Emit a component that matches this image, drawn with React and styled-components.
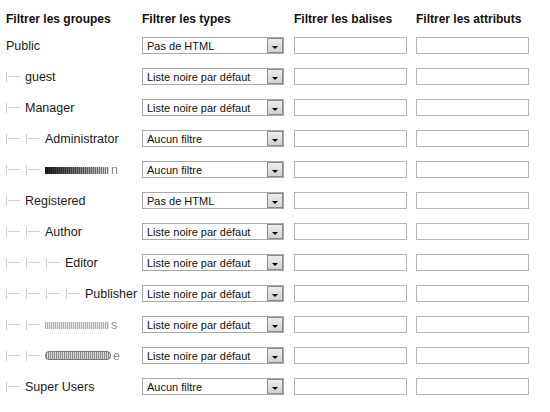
import React from "react";
import styled, { createGlobalStyle } from "styled-components";

const GlobalStyle = createGlobalStyle`
  html, body {
    margin: 0;
    padding: 0;
    background: #fff;
  }
  body {
    font-family: "Liberation Sans", Arial, sans-serif;
    color: #1a1a1a;
  }
`;

const groups = [
  { id: 1, name: "Public", level: 0, filter: "Pas de HTML" },
  { id: 2, name: "guest", level: 1, filter: "Liste noire par défaut" },
  { id: 3, name: "Manager", level: 1, filter: "Liste noire par défaut" },
  { id: 4, name: "Administrator", level: 2, filter: "Aucun filtre" },
  { id: 5, hidden: "dark", tail: "n", level: 2, filter: "Aucun filtre" },
  { id: 6, name: "Registered", level: 1, filter: "Pas de HTML" },
  { id: 7, name: "Author", level: 2, filter: "Liste noire par défaut" },
  { id: 8, name: "Editor", level: 3, filter: "Liste noire par défaut" },
  { id: 9, name: "Publisher", level: 4, filter: "Liste noire par défaut" },
  { id: 10, hidden: "light", tail: "s", level: 2, filter: "Liste noire par défaut" },
  { id: 11, hidden: "outline", tail: "e", level: 2, filter: "Liste noire par défaut" },
  { id: 12, name: "Super Users", level: 1, filter: "Aucun filtre" },
];

const Page = styled.div`
  padding: 8px 0 0 6px;
`;

const Grid = styled.div`
  display: grid;
  grid-template-columns: 136px 152px 122px 114px;
  grid-template-rows: 22px;
  grid-auto-rows: 31px;
  align-items: center;
`;

const Head = styled.div`
  font-weight: bold;
  font-size: 12px;
  color: #111;
  white-space: nowrap;
`;

const GroupCell = styled.div`
  display: flex;
  align-items: center;
  font-size: 12.5px;
  white-space: nowrap;
  height: 31px;
`;

const Branch = styled.span`
  display: inline-flex;
  align-items: center;
  width: 20px;
  height: 10px;
  flex: none;
  box-sizing: border-box;
  border-left: 1px solid #cfcfcf;

  &::after {
    content: "";
    display: block;
    width: 12px;
    height: 1px;
    margin-left: 1px;
    background: #cfcfcf;
  }
`;

const Label = styled.span`
  margin-left: ${(p) => (p.$nested ? "-1px" : "0")};
`;

// blurred-out group names: striped smears with one legible trailing letter
const smudgeFill = {
  dark: "repeating-linear-gradient(90deg, #888 0 1px, #f4f4f4 1px 2px), linear-gradient(90deg, #222 0%, #777 45%, #e8e8e8 100%)",
  light: "repeating-linear-gradient(90deg, #999 0 1px, #e4e4e4 1px 2px)",
  outline: "repeating-linear-gradient(90deg, #888 0 1px, #ddd 1px 2px)",
};

const Smudge = styled.span`
  display: inline-block;
  width: 64px;
  height: 7px;
  margin-right: 2px;
  filter: blur(0.6px);
  background: ${(p) => smudgeFill[p.$kind]};
  background-blend-mode: multiply;
  border: ${(p) => (p.$kind === "outline" ? "1px solid #777" : "none")};
  border-radius: ${(p) => (p.$kind === "outline" ? "4px" : "0")};
  opacity: ${(p) => (p.$kind === "light" ? 0.8 : 1)};
`;

const Tail = styled.span`
  color: #888;
  filter: blur(0.4px);
`;

const Select = styled.div`
  width: 142px;
  height: 17px;
  box-sizing: border-box;
  border: 1px solid #a9a9a9;
  display: flex;
  align-items: center;
  justify-content: space-between;
  font-size: 11px;
  padding-left: 4px;
  background: #fff;
  color: #111;
`;

const ArrowButton = styled.span`
  width: 16px;
  height: 15px;
  box-sizing: border-box;
  border: 1px solid #8a8a8a;
  background: linear-gradient(#ececec, #d2d2d2);
  display: flex;
  align-items: center;
  justify-content: center;

  &::after {
    content: "";
    width: 0;
    height: 0;
    margin-top: 3px;
    border-left: 3px solid transparent;
    border-right: 3px solid transparent;
    border-top: 3px solid #000;
  }
`;

const Field = styled.div`
  width: 113px;
  height: 17px;
  box-sizing: border-box;
  border: 1px solid #b5b5b5;
  background: #fff;
`;

function GroupName({ group }) {
  return (
    <GroupCell>
      {Array.from({ length: group.level }).map((_, i) => (
        <Branch key={i} />
      ))}
      <Label $nested={group.level > 0}>
        {group.hidden ? (
          <>
            <Smudge $kind={group.hidden} />
            <Tail>{group.tail}</Tail>
          </>
        ) : (
          group.name
        )}
      </Label>
    </GroupCell>
  );
}

export default function App() {
  return (
    <Page>
      <GlobalStyle />
      <Grid>
        <Head>Filtrer les groupes</Head>
        <Head>Filtrer les types</Head>
        <Head>Filtrer les balises</Head>
        <Head>Filtrer les attributs</Head>
        {groups.map((g) => (
          <React.Fragment key={g.id}>
            <GroupName group={g} />
            <Select>
              <span>{g.filter}</span>
              <ArrowButton />
            </Select>
            <Field />
            <Field />
          </React.Fragment>
        ))}
      </Grid>
    </Page>
  );
}
